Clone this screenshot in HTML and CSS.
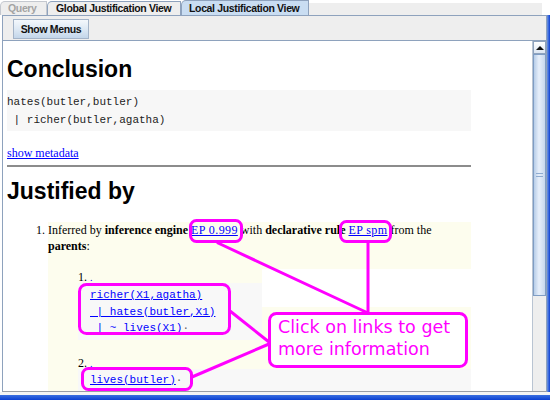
FILE: index.html
```html
<!DOCTYPE html>
<html>
<head>
<meta charset="utf-8">
<link rel="stylesheet" href="styles.css">
</head>
<body>
<div class="window">
  <div class="tabs">
    <div class="tab tab-query">Query</div>
    <div class="tab tab-global">Global Justification View</div>
    <div class="tab tab-local">Local Justification View</div>
    <div class="tab-fill"></div>
  </div>
  <div class="frame">
    <div class="panel">
      <div class="toolbar"><div class="btn">Show Menus</div></div>
      <div class="viewport">
        <div class="content">
          <h1 class="heading heading-first">Conclusion</h1>
          <pre class="formula">hates(butler,butler)
 | richer(butler,agatha)</pre>
          <div class="meta"><a href="#">show metadata</a></div>
          <hr class="rule">
          <h1 class="heading heading-second">Justified by</h1>
          <ol class="just">
            <li>
              <div class="node">
                <p class="infer">Inferred by <b>inference engine</b> <a href="#" class="src">EP 0.999</a> with <b>declarative rule</b> <a href="#" class="src">EP spm</a> from the<br><b>parents</b>:</p>
                <ol class="parents">
                  <li class="parent parent-one">
                    <div class="parent-head"><a href="#" class="dot">.</a></div>
                    <pre class="expr"><a href="#">richer(X1,agatha)</a>
<a href="#"> | hates(butler,X1)</a>
<a href="#"> | ~ lives(X1)</a><span class="mid">·</span></pre>
                  </li>
                  <li class="parent parent-two">
                    <div class="parent-head"><a href="#" class="dot">.</a></div>
                    <pre class="expr expr-two"><a href="#">lives(butler)</a><span class="mid">·</span></pre>
                  </li>
                </ol>
              </div>
            </li>
          </ol>
        </div>
        <div class="scrollbar">
          <div class="sb-up"><span class="sb-arrow"></span></div>
          <div class="sb-thumb"><span class="sb-grip"></span></div>
          <div class="sb-track"></div>
        </div>
      </div>
    </div>
    <div class="edge"></div>
  </div>
  <div class="bottom-gap"></div>
  <div class="taskbar"></div>
</div>
<svg class="annot" width="550" height="400" viewBox="0 0 550 400">
  <g fill="none" stroke="#ff00ff" stroke-width="3" stroke-linecap="round" stroke-linejoin="round">
    <rect x="190.5" y="220.5" width="51" height="21" rx="6"/>
    <rect x="340.5" y="221.5" width="50" height="20" rx="6"/>
    <rect x="79.5" y="284.5" width="150" height="49" rx="7"/>
    <rect x="82.5" y="368.5" width="109" height="21" rx="6"/>
    <line x1="218" y1="243" x2="368" y2="313"/>
    <line x1="368" y1="243" x2="368" y2="313"/>
    <line x1="230" y1="311" x2="269" y2="342"/>
    <line x1="269" y1="344" x2="192" y2="377"/>
    <rect x="269.5" y="313.5" width="197" height="53" rx="7" fill="#ffffff"/>
  </g>
  <text x="278" y="333" class="callout">Click on links to get</text>
  <text x="278" y="355" class="callout">more information</text>
</svg>
</body>
</html>
```

FILE: styles.css
```css
* { box-sizing: border-box; }
html, body { margin: 0; padding: 0; }
body {
  width: 550px;
  height: 400px;
  overflow: hidden;
  background: #ffffff;
  font-family: "Liberation Sans", Arial, sans-serif;
  position: relative;
}
.window {
  display: flex;
  flex-direction: column;
  height: 400px;
}

/* tabs */
.tabs {
  display: flex;
  align-items: flex-end;
  height: 15px;
  flex: none;
}
.tab {
  height: 14px;
  font-size: 10.5px;
  font-weight: bold;
  letter-spacing: -0.35px;
  line-height: 13px;
  color: #111111;
  border: 1px solid #8ea2bd;
  border-bottom: none;
  background: #eeeeee;
  border-radius: 5px 0 0 0;
  white-space: nowrap;
}
.tab-query { width: 47px; padding-left: 7px; color: #a3a3a3; border-color: #c4c8cf; }
.tab-global { width: 134px; padding-left: 8px; }
.tab-local { width: 128px; padding-left: 7px; height: 15px; line-height: 14px; background: #c9ddf2; }
.tab-fill {
  width: 233px;
  height: 12px;
  background: #eeeeee;
  align-self: flex-end;
}

.frame {
  flex: 1;
  display: flex;
  min-height: 0;
}
.panel {
  margin-left: 2px;
  width: 545px;
  display: flex;
  flex-direction: column;
  border: 1px solid #8ea2bd;
  border-bottom-color: #9a9ea6;
}
.edge {
  flex: 1;
  background: linear-gradient(to right, #6f95e0, #0a3fd6);
}
.toolbar {
  height: 25px;
  flex: none;
  background: #eeeeee;
  border-bottom: 1px solid #8ea2bd;
  padding: 3px 0 0 10px;
}
.btn {
  width: 76px;
  height: 20px;
  font-size: 10.5px;
  font-weight: bold;
  letter-spacing: -0.35px;
  line-height: 18px;
  text-align: center;
  color: #111111;
  border: 1px solid #a4b4c8;
  background: linear-gradient(to bottom, #f4f8fc, #dbe7f3 55%, #c3d6ea);
}
.viewport {
  flex: 1;
  display: flex;
  min-height: 0;
}
.content {
  flex: 1;
  background: #ffffff;
  padding: 14px 0 0 4px;
  overflow: hidden;
  font-family: "Liberation Serif", "Times New Roman", serif;
  font-size: 12px;
}
.heading {
  font-family: "Liberation Sans", Arial, sans-serif;
  font-size: 23px;
  line-height: 28px;
  font-weight: bold;
  margin: 0;
}
.heading-second { margin-top: 10px; }
.formula {
  width: 464px;
  margin: 7px 0 0 0;
  padding: 3px 0 2px 0;
  background: #f7f7f7;
  font-family: "Liberation Mono", "Courier New", monospace;
  font-size: 11px;
  line-height: 18px;
  color: #222222;
}
.meta {
  margin-top: 15px;
  line-height: 15px;
}
a { color: #0000ff; text-decoration: underline; }
.src { letter-spacing: 0.4px; }
.rule {
  width: 464px;
  margin: 4px 0 0 0;
  border: none;
  border-top: 2px solid #8c8c8c;
  height: 0;
}
.just {
  margin: 17px 0 0 0;
  padding-left: 41px;
  width: 464px;
  line-height: 16px;
}
.node { padding-bottom: 4px; }
.infer {
  margin: 0;
  padding-bottom: 15px;
  background: #fdfdee;
}
.parents {
  margin: 0;
  padding: 0 0 4px 42px;
  background:
    linear-gradient(#fdfdee, #fdfdee) left top / 214px 38px no-repeat,
    linear-gradient(#fdfdee, #fdfdee) left 38px / 100% 100% no-repeat;
}
.parent-head { line-height: 10px; font-size: 10px; }
.parent-one .parent-head { margin-top: 0; }
.dot { text-decoration: none; font-size: 10px; }
.expr {
  margin: 0 0 0 -12px;
  padding: 4px 0 3px 12px;
  width: 184px;
  background: #f8f8f8;
  font-family: "Liberation Mono", "Courier New", monospace;
  font-size: 11px;
  line-height: 16.5px;
}
.expr-two { width: auto; padding-top: 3px; padding-bottom: 4px; }
.parent-two { margin-top: 15px; }
.mid { color: #666666; }

/* scrollbar */
.scrollbar {
  width: 14px;
  flex: none;
  display: flex;
  flex-direction: column;
  border-left: 1px solid #b9c4d2;
  background: #eeeeee;
}
.sb-up {
  height: 13px;
  border: 1px solid #8ea2bd;
  background: linear-gradient(to bottom, #ffffff, #dce6f2);
  display: flex;
  align-items: center;
  justify-content: center;
}
.sb-arrow {
  width: 0;
  height: 0;
  border-left: 4px solid transparent;
  border-right: 4px solid transparent;
  border-bottom: 4px solid #111111;
}
.sb-thumb {
  height: 242px;
  border: 1px solid #7f9dc4;
  background: linear-gradient(to right, #b7cde8, #e7effa 45%, #c7d8ee);
  display: flex;
  justify-content: center;
  padding-top: 118px;
}
.sb-grip {
  width: 7px;
  height: 4px;
  border-top: 1px solid #8eabd0;
  border-bottom: 1px solid #8eabd0;
}
.sb-track { flex: 1; background: #eeeeee; }

.bottom-gap { height: 3px; flex: none; background: #f4f4f4; }
.taskbar {
  height: 5px;
  flex: none;
  background: linear-gradient(to bottom, #3a6fe0, #0b3fd2);
}

.annot {
  position: absolute;
  left: 0;
  top: 0;
}
.callout {
  font-family: "DejaVu Sans", Verdana, sans-serif;
  font-size: 17.5px;
  fill: #ff00ff;
}
```
